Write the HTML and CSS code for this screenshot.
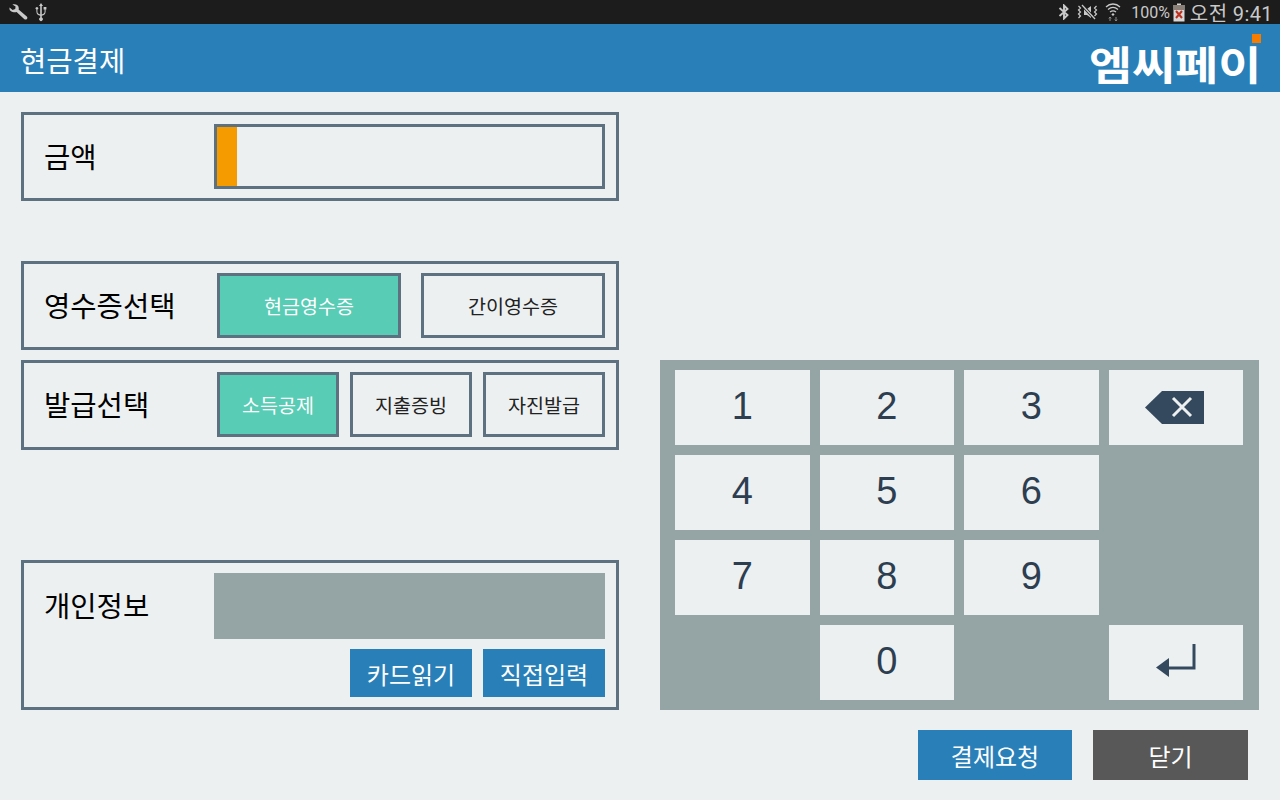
FILE: index.html
```html
<!DOCTYPE html>
<html lang="ko">
<head>
  <meta charset="UTF-8" />
  <meta name="viewport" content="width=device-width, initial-scale=1" />
  <title>현금결제</title>
  <link rel="stylesheet" href="styles.css">
</head>
<body>
  <div class="status-bar">
    <div class="status-left">
      <svg width="19" height="17" viewBox="0 0 19 17"><path d="M0.6 3.4 L3.6 6 L6.2 5 L6.6 2.6 L3.4 0.6 C6.4 -0.4 10 1 9.8 4.6 L9.6 5.6 L17.8 12.4 C19.4 14 17.4 16.6 15.4 15.2 L7.6 8 C4.2 8.8 -0.4 7.4 0.6 3.4 Z" fill="#c9c9c9"/></svg>
      <svg width="14" height="20" viewBox="0 0 14 20"><path d="M7 1 L9 4 H7.8 V12.5 C9.5 12 10.6 11.5 10.6 9.5 V7.5 H9.6 V5 H12.4 V7.5 H11.6 V9.6 C11.6 12.4 10 13.2 7.8 13.8 V15.6 A1.8 1.8 0 1 1 6.2 15.6 V13.8 C4 13.2 2.4 12.4 2.4 9.6 V7.6 A1.3 1.3 0 1 1 3.4 7.6 V9.5 C3.4 11.5 4.5 12 6.2 12.5 V4 H5 Z" fill="#c9c9c9"/></svg>
    </div>
    <div class="status-right">
      <svg width="12" height="16" viewBox="0 0 12 16"><path d="M1.5 4 L9.5 11 L6 14.5 V1.5 L9.5 5 L1.5 12" fill="none" stroke="#c9c9c9" stroke-width="1.9"/></svg>
      <svg class="icon-mute" width="21" height="16" viewBox="0 0 21 16"><path d="M7 5 H10 L14 2 V14 L10 11 H7 Z" fill="#c9c9c9"/><path d="M5 1 L18 15" stroke="#1c1c1c" stroke-width="3"/><path d="M5 1 L18 15" stroke="#c9c9c9" stroke-width="1.3"/><path d="M1.5 2 L3.5 4 L1.5 6 L3.5 8 L1.5 10 L3.5 12 L1.5 14 M19.5 2 L17.5 4 L19.5 6 L17.5 8 L19.5 10 L17.5 12" fill="none" stroke="#c9c9c9" stroke-width="1.2"/></svg>
      <svg width="16" height="20" viewBox="0 0 16 20"><path d="M1 5 C5 1 11 1 15 5 M3 7.5 C6 5 10 5 13 7.5 M5 10 C7 8.5 9 8.5 11 10" fill="none" stroke="#c9c9c9" stroke-width="1.3"/><path d="M8 11 L9.6 12.4 L8 14 L6.4 12.4 Z" fill="#c9c9c9"/><path d="M5 15 V19 M3.8 16.4 L5 15 L6.2 16.4 M11 15 V19 M9.8 17.6 L11 19 L12.2 17.6" fill="none" stroke="#8a8a8a" stroke-width="1"/></svg>
      <span class="battery-text">100%</span>
      <svg class="icon-battery" width="12" height="19" viewBox="0 0 12 19"><path d="M4 0.5 H8 V2 H11.5 V18.5 H0.5 V2 H4 Z" fill="#d8d8d8"/><path d="M0.5 2 H11.5 V7 H0.5 Z" fill="#8a8078"/><path d="M3 8 L9 15 M9 8 L3 15" stroke="#c0311f" stroke-width="2"/></svg>
      <span class="clock">오전 9:41</span>
    </div>
  </div>

  <header class="app-header">
    <h1 class="app-title">현금결제</h1>
    <div class="logo"><span class="logo-dot"></span><span class="logo-text">엠씨페이</span></div>
  </header>

  <main class="content">
    <section class="form-col">
      <div class="panel panel-amount">
        <div class="panel-label">금액</div>
        <div class="amount-input"><span class="cursor"></span></div>
      </div>

      <div class="panel panel-receipt">
        <div class="panel-label">영수증선택</div>
        <div class="option-row two">
          <button class="option selected">현금영수증</button>
          <button class="option">간이영수증</button>
        </div>
      </div>

      <div class="panel panel-issue">
        <div class="panel-label">발급선택</div>
        <div class="option-row three">
          <button class="option selected">소득공제</button>
          <button class="option">지출증빙</button>
          <button class="option">자진발급</button>
        </div>
      </div>

      <div class="panel panel-info">
        <div class="info-top">
          <div class="panel-label">개인정보</div>
          <div class="info-box"></div>
        </div>
        <div class="info-actions">
          <button class="action">카드읽기</button>
          <button class="action">직접입력</button>
        </div>
      </div>
    </section>

    <section class="pad-col">
      <div class="keypad">
        <button class="key">1</button>
        <button class="key">2</button>
        <button class="key">3</button>
        <button class="key key-back">
          <svg width="59" height="33" viewBox="0 0 59 33"><path d="M17 0 H59 V33 H17 L0 16.5 Z" fill="#34495e"/><path d="M28 7 L46 25 M46 7 L28 25" stroke="#ecf0f1" stroke-width="3"/></svg>
        </button>
        <button class="key">4</button>
        <button class="key">5</button>
        <button class="key">6</button>
        <span class="key-blank"></span>
        <button class="key">7</button>
        <button class="key">8</button>
        <button class="key">9</button>
        <span class="key-blank"></span>
        <span class="key-blank"></span>
        <button class="key">0</button>
        <span class="key-blank"></span>
        <button class="key">
          <svg width="40" height="34" viewBox="0 0 40 34"><path d="M38 0 V24 H12" fill="none" stroke="#34495e" stroke-width="3"/><path d="M13 14 V33 L0 23.5 Z" fill="#34495e"/></svg>
        </button>
      </div>
      <div class="pad-actions">
        <button class="pay-btn">결제요청</button>
        <button class="close-btn">닫기</button>
      </div>
    </section>
  </main>
</body>
</html>
```

FILE: styles.css
```css
* {
  box-sizing: border-box;
}

body {
  margin: 0;
  width: 1280px;
  height: 800px;
  overflow: hidden;
  background: #ecf0f1;
  font-family: "Roboto", "Noto Sans CJK KR", sans-serif;
  color: #000;
}

button {
  font-family: inherit;
  border: none;
  padding: 0;
}

.status-bar {
  height: 24px;
  background: #1c1c1c;
  display: flex;
  align-items: center;
  justify-content: space-between;
  padding: 0 7px 0 9px;
  color: #c9c9c9;
}

.status-left,
.status-right {
  display: flex;
  align-items: center;
}

.status-left {
  gap: 6px;
}

.status-right {
  gap: 7px;
}

.battery-text {
  font-size: 16px;
  margin-left: 3px;
  margin-right: -4px;
}

.icon-battery {
  margin-right: -2px;
}

.clock {
  font-size: 20px;
  letter-spacing: 0.4px;
}

.app-header {
  height: 68px;
  background: #2980b9;
  display: flex;
  align-items: center;
  justify-content: space-between;
  padding: 2px 20px 0;
}

.app-title {
  margin: 0;
  font-size: 28.6px;
  font-weight: 400;
  color: #fff;
}

.logo {
  position: relative;
  margin-right: -1px;
  padding-top: 8px;
  font-family: "Noto Sans CJK KR", sans-serif;
  font-weight: 700;
  font-size: 40px;
  line-height: 58px;
  color: #fff;
}

.logo-text {
  display: block;
  transform: scaleX(1.17);
  transform-origin: right center;
}

.logo-dot {
  position: absolute;
  top: 8px;
  right: 0;
  width: 9px;
  height: 9px;
  background: #f57c00;
}

.content {
  display: flex;
  padding: 20px 21px 0;
}

.form-col {
  width: 598px;
  display: flex;
  flex-direction: column;
}

.panel {
  border: 3px solid #5d7180;
  display: flex;
  align-items: center;
}

.panel-label {
  width: 190px;
  padding: 2px 0 0 20px;
  font-size: 28.6px;
  line-height: 40px;
  flex-shrink: 0;
}

.panel-amount {
  height: 89px;
  padding-right: 11px;
}

.amount-input {
  width: 392px;
  height: 65px;
  border: 3px solid #5d7180;
  display: flex;
}

.cursor {
  width: 20px;
  background: #f59b00;
}

.panel-receipt {
  height: 89px;
  margin-top: 60px;
}

.panel-issue {
  height: 90px;
  margin-top: 10px;
  padding-bottom: 1px;
}

.option-row {
  display: flex;
  margin-left: 3px;
}

.option-row.two {
  gap: 20px;
}

.option-row.three {
  gap: 11px;
}

.option {
  height: 65px;
  border: 3px solid #5d7180;
  background: #ecf0f1;
  font-size: 19.6px;
  color: #222;
}

.option.selected {
  background: #58ccb4;
  color: #fff;
}

.two .option {
  width: 184px;
}

.three .option {
  width: 122px;
}

.panel-info {
  height: 150px;
  margin-top: 110px;
  flex-direction: column;
  align-items: stretch;
  padding: 10px 11px 0 0;
}

.info-top {
  display: flex;
  align-items: center;
}

.info-top .panel-label {
  padding-top: 2px;
}

.info-box {
  flex: 1;
  height: 66px;
  background: #95a5a6;
}

.info-actions {
  display: flex;
  justify-content: flex-end;
  gap: 11px;
  margin-top: 10px;
}

.action {
  width: 122px;
  height: 48px;
  background: #2980b9;
  color: #fff;
  font-size: 24px;
}

.pad-col {
  width: 599px;
  margin-left: 41px;
  padding-top: 248px;
}

.keypad {
  height: 350px;
  background: #95a5a6;
  padding: 10px 15px;
  display: grid;
  grid-template-columns: repeat(4, 134.5px);
  grid-auto-rows: 75px;
  gap: 10px;
}

.key {
  background: #ecf0f1;
  color: #2c3e50;
  font-family: "Liberation Sans", sans-serif;
  font-size: 38px;
  padding-bottom: 3px;
  display: flex;
  align-items: center;
  justify-content: center;
}

.key-back {
  padding: 0 3px 0 0;
}

.pad-actions {
  display: flex;
  justify-content: flex-end;
  gap: 21px;
  margin-top: 20px;
  padding-right: 11px;
}

.pay-btn,
.close-btn {
  width: 154px;
  height: 50px;
  color: #fff;
  font-size: 24px;
}

.pay-btn {
  background: #2980b9;
}

.close-btn {
  width: 155px;
  background: #585858;
}
```
